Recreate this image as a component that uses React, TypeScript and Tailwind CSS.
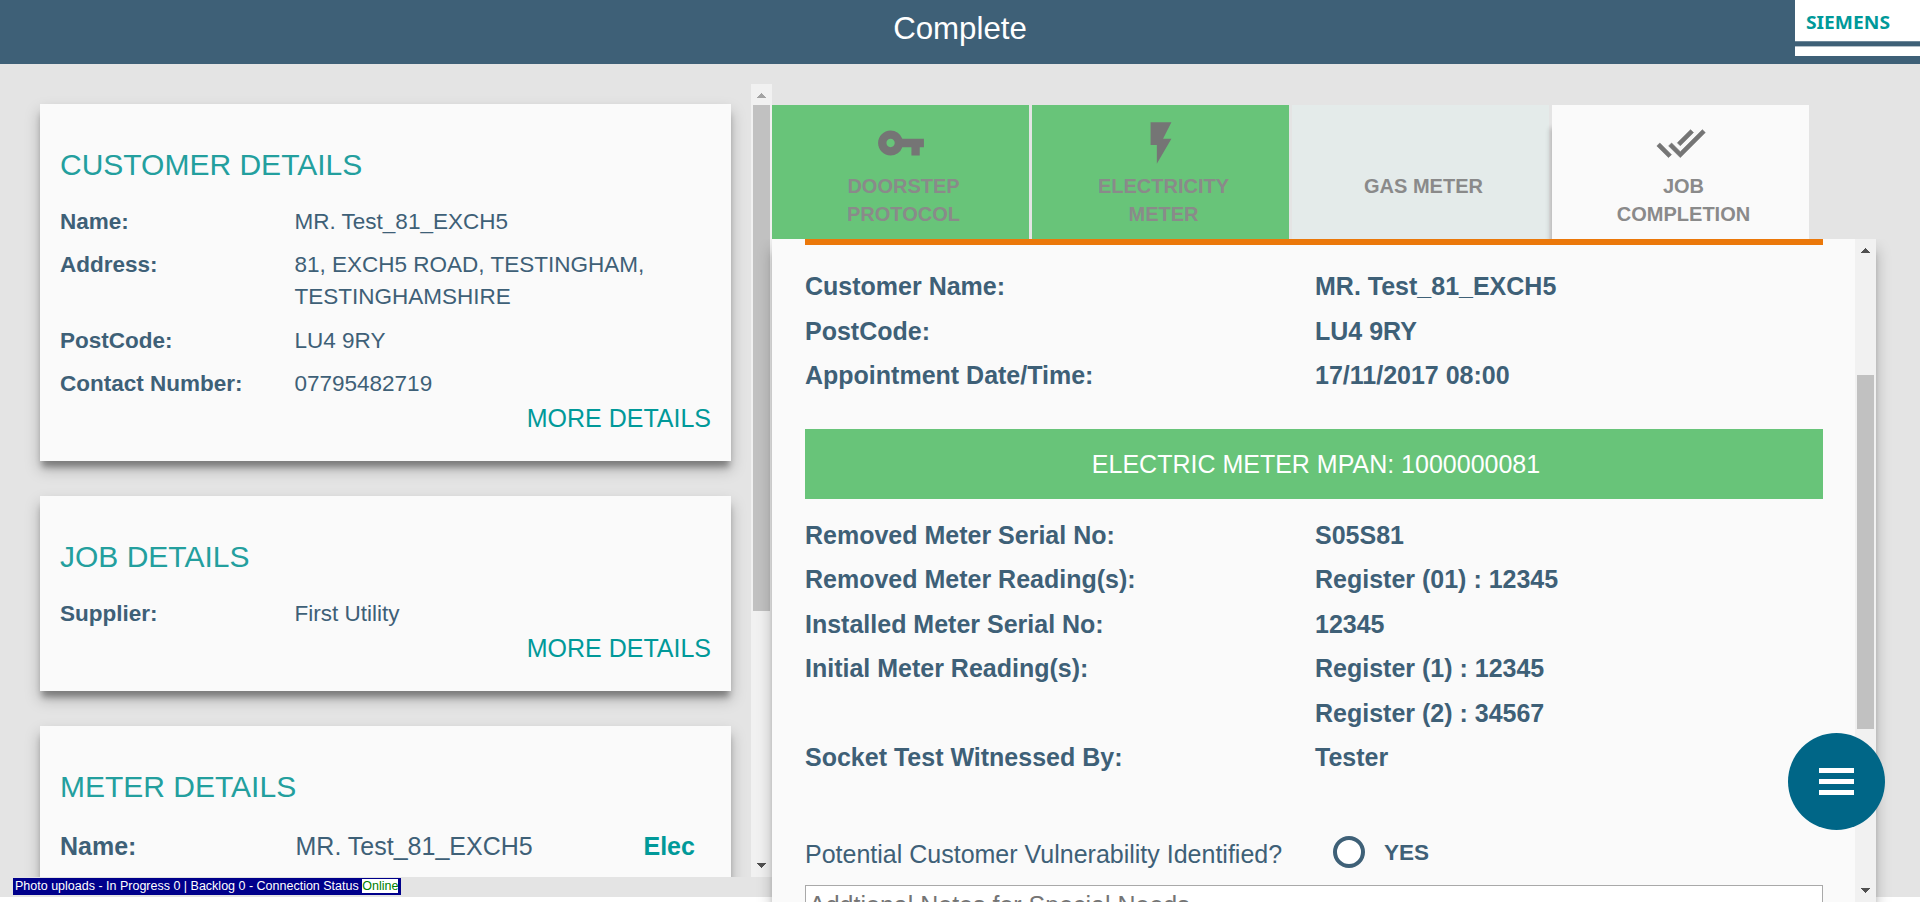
import type { ReactNode } from "react";
import { MdFlashOn, MdVpnKey } from "react-icons/md";

const cardShadow =
  "shadow-[0_8px_6px_-2px_rgba(0,0,0,0.3),0_8px_14px_0px_rgba(0,0,0,0.25)]";

function Arrow({ dir, className }: { dir: "up" | "down"; className: string }) {
  return (
    <svg viewBox="0 0 9 5" className={`h-[5px] w-[9px] shrink-0 ${className}`} shapeRendering="crispEdges">
      <path d={dir === "up" ? "M4 0h1v1h1v1h1v1h1v1h1v1H0V4h1V3h1V2h1V1h1z" : "M0 0h9v1H8v1H7v1H6v1H5v1H4V4H3V3H2V2H1V1H0z"} fill="currentColor" />
    </svg>
  );
}

function DoubleCheck() {
  return (
    <svg viewBox="0 0 24 24" className="h-[50px] w-[50px] fill-current stroke-current" strokeWidth={0.3}>
      <path d="M18 7l-1.41-1.41-6.34 6.34 1.41 1.41L18 7zm4.24-1.41L11.66 16.17 7.48 12l-1.41 1.41L11.66 19l12-12-1.42-1.41zM.41 13.41L6 19l1.41-1.41L1.83 12 .41 13.41z" />
    </svg>
  );
}

function DetailRow({ label, children }: { label: string; children: ReactNode }) {
  return (
    <div className="flex">
      <div className="w-[234.5px] shrink-0 font-bold">{label}</div>
      <div>{children}</div>
    </div>
  );
}

function Card({ title, more, children, className = "" }: { title: string; more?: boolean; children: ReactNode; className?: string }) {
  return (
    <section className={`shrink-0 bg-[#fafafa] px-5 pt-[41px] ${cardShadow} ${className}`}>
      <h2 className="text-[30px] leading-[40px] text-[#239f9e]">{title}</h2>
      <div className="mt-[21px] flex flex-col gap-[11.3px] text-[22.5px] leading-[32px]">{children}</div>
      {more && <div className="mt-[2.4px] text-right text-[25px] leading-[32px] text-[#009999]">MORE DETAILS</div>}
    </section>
  );
}

function Tab({ icon, children, className }: { icon?: ReactNode; children: ReactNode; className: string }) {
  return (
    <div className={`flex h-[134px] w-[257px] flex-col items-center pt-[13px] ${className}`}>
      <div className="h-[50px] text-[50px] text-[#757575]">{icon}</div>
      <div className="mt-1 pl-1.5 text-center text-[20px] leading-[28px] font-bold text-[#8a8a8a]">{children}</div>
    </div>
  );
}

function SummaryRow({ label, value }: { label: string; value: string }) {
  return (
    <div className="flex h-[44.5px] text-[25px] leading-[44.5px] font-bold">
      <div className="w-[510px] shrink-0">{label}</div>
      <div>{value}</div>
    </div>
  );
}

export default function App() {
  return (
    <div className="relative flex h-[902px] w-[1920px] flex-col overflow-hidden bg-white font-['Liberation_Sans',Arial,sans-serif] text-[#3e6077]">
      <header className="flex h-16 shrink-0 bg-[#3e6077]">
        <div className="w-[125px]" />
        <h1 className="flex-1 pt-[9px] text-center text-[31.25px] leading-[40px] text-white">Complete</h1>
        <div className="flex h-[56px] w-[125px] flex-col bg-white">
          <svg className="h-[41px] w-[125px]" viewBox="0 0 125 41">
            <text x="11" y="28.5" textLength="84" lengthAdjust="spacingAndGlyphs" className="fill-[#009999] font-['Noto_Sans',sans-serif] text-[18.5px] font-bold">
              SIEMENS
            </text>
          </svg>
          <div className="h-[6px] border-t border-b border-t-[#6d8799] border-b-[#b4c0c9] bg-[#3e6077]" />
        </div>
      </header>

      <div className="flex h-[838px] shrink-0 bg-[linear-gradient(#e4e4e4_833px,#fff_833px)]">
        <aside className="mt-5 flex h-[793px] w-[772px] shrink-0 overflow-hidden">
          <div className="flex flex-1 flex-col gap-[35px] pt-5 pr-5 pl-10">
            <Card title="CUSTOMER DETAILS" more className="h-[357px]">
              <DetailRow label="Name:">MR. Test_81_EXCH5</DetailRow>
              <DetailRow label="Address:">
                81, EXCH5 ROAD, TESTINGHAM,
                <br />
                TESTINGHAMSHIRE
              </DetailRow>
              <DetailRow label="PostCode:">LU4 9RY</DetailRow>
              <DetailRow label="Contact Number:">07795482719</DetailRow>
            </Card>
            <Card title="JOB DETAILS" more className="h-[195px]">
              <DetailRow label="Supplier:">First Utility</DetailRow>
            </Card>
            <Card title="METER DETAILS" className="h-[300px]">
              <div className="mt-[2px] flex text-[25px]">
                <div className="w-[235.5px] font-bold">Name:</div>
                <div className="w-[348px]">MR. Test_81_EXCH5</div>
                <div className="font-bold text-[#009999]">Elec</div>
              </div>
            </Card>
          </div>
          <div className="flex w-[21px] flex-col items-center bg-[#f1f1f1]">
            <div className="flex h-[21px] pt-[9px]">
              <Arrow dir="up" className="text-[#a3a3a3]" />
            </div>
            <div className="h-[506px] w-[17px] bg-[#c1c1c1]" />
            <div className="mt-auto flex h-[14px]">
              <Arrow dir="down" className="text-[#505050]" />
            </div>
          </div>
        </aside>

        <main className="flex w-[1104px] flex-col pt-[41px]">
          <div className="flex shrink-0 gap-[3px]">
            <Tab icon={<MdVpnKey />} className="bg-[#68c479]">
              DOORSTEP
              <br />
              PROTOCOL
            </Tab>
            <Tab icon={<MdFlashOn />} className="bg-[#68c479]">
              ELECTRICITY
              <br />
              METER
            </Tab>
            <Tab className="bg-[#e4ebea]">GAS METER</Tab>
            <Tab icon={<DoubleCheck />} className="bg-[#fafafa] shadow-[-4px_21px_5px_-2px_rgba(0,0,0,0.2)]">
              JOB
              <br />
              COMPLETION
            </Tab>
          </div>

          <div className="z-10 flex min-h-0 flex-1 bg-[#fafafa] shadow-[0_14px_5px_-1px_rgba(0,0,0,0.16),0_10px_14px_0px_rgba(0,0,0,0.25)] [clip-path:inset(0_-40px_0_-40px)]">
            <div className="w-[1083px] overflow-hidden pr-8 pl-[33px]">
              <div className="h-1.5 bg-[#eb780a]" />
              <div className="mt-[19px]">
                <SummaryRow label="Customer Name:" value="MR. Test_81_EXCH5" />
                <SummaryRow label="PostCode:" value="LU4 9RY" />
                <SummaryRow label="Appointment Date/Time:" value="17/11/2017 08:00" />
              </div>
              <div className="mt-[31.5px] h-[70px] bg-[#68c479] pl-1 text-center text-[25px] leading-[71px] text-white">
                ELECTRIC METER MPAN: 1000000081
              </div>
              <div className="mt-[13.6px]">
                <SummaryRow label="Removed Meter Serial No:" value="S05S81" />
                <SummaryRow label="Removed Meter Reading(s):" value="Register (01) : 12345" />
                <SummaryRow label="Installed Meter Serial No:" value="12345" />
                <SummaryRow label="Initial Meter Reading(s):" value="Register (1) : 12345" />
                <SummaryRow label="" value="Register (2) : 34567" />
                <SummaryRow label="Socket Test Witnessed By:" value="Tester" />
              </div>
              <div className="mt-[56.4px] flex h-8">
                <div className="w-[528px] pt-[2px] text-[25px] leading-[32px]">Potential Customer Vulnerability Identified?</div>
                <div className="h-8 w-8 rounded-full border-4 border-[#3e6077] bg-white" />
                <div className="pt-[1px] pl-[19px] text-[22.5px] leading-[32px] font-bold">YES</div>
              </div>
              <div className="mt-[17px] h-[100px] border border-[#a9a9a9] bg-white pt-[3px] pl-[3px] text-[25px] leading-[32px] text-[#757575]">
                Addtional Notes for Special Needs
              </div>
            </div>
            <div className="flex w-[21px] flex-col items-center bg-[#f1f1f1]">
              <div className="flex h-[136px] pt-[9px]">
                <Arrow dir="up" className="text-[#505050]" />
              </div>
              <div className="h-[354px] w-[17px] bg-[#c1c1c1]" />
              <div className="mt-auto flex h-[14px]">
                <Arrow dir="down" className="text-[#505050]" />
              </div>
            </div>
          </div>
        </main>
      </div>

      <div className="absolute top-[878px] left-[13px] flex h-[17px] w-[388px] items-start bg-[#00008b] pt-px pl-[2px] text-[12.5px] leading-[14px] whitespace-nowrap text-white">
        Photo uploads - In Progress 0 | Backlog 0 - Connection Status&nbsp;
        <span className="bg-white text-[#008000]">Online</span>
      </div>

      <button className="absolute top-[733px] left-[1788px] z-20 flex h-[97px] w-[97px] flex-col items-center justify-center gap-[6px] rounded-full bg-[#006687] pb-px">
        <span className="h-[5px] w-[35px] bg-white" />
        <span className="h-[5px] w-[35px] bg-white" />
        <span className="h-[5px] w-[35px] bg-white" />
      </button>
    </div>
  );
}
